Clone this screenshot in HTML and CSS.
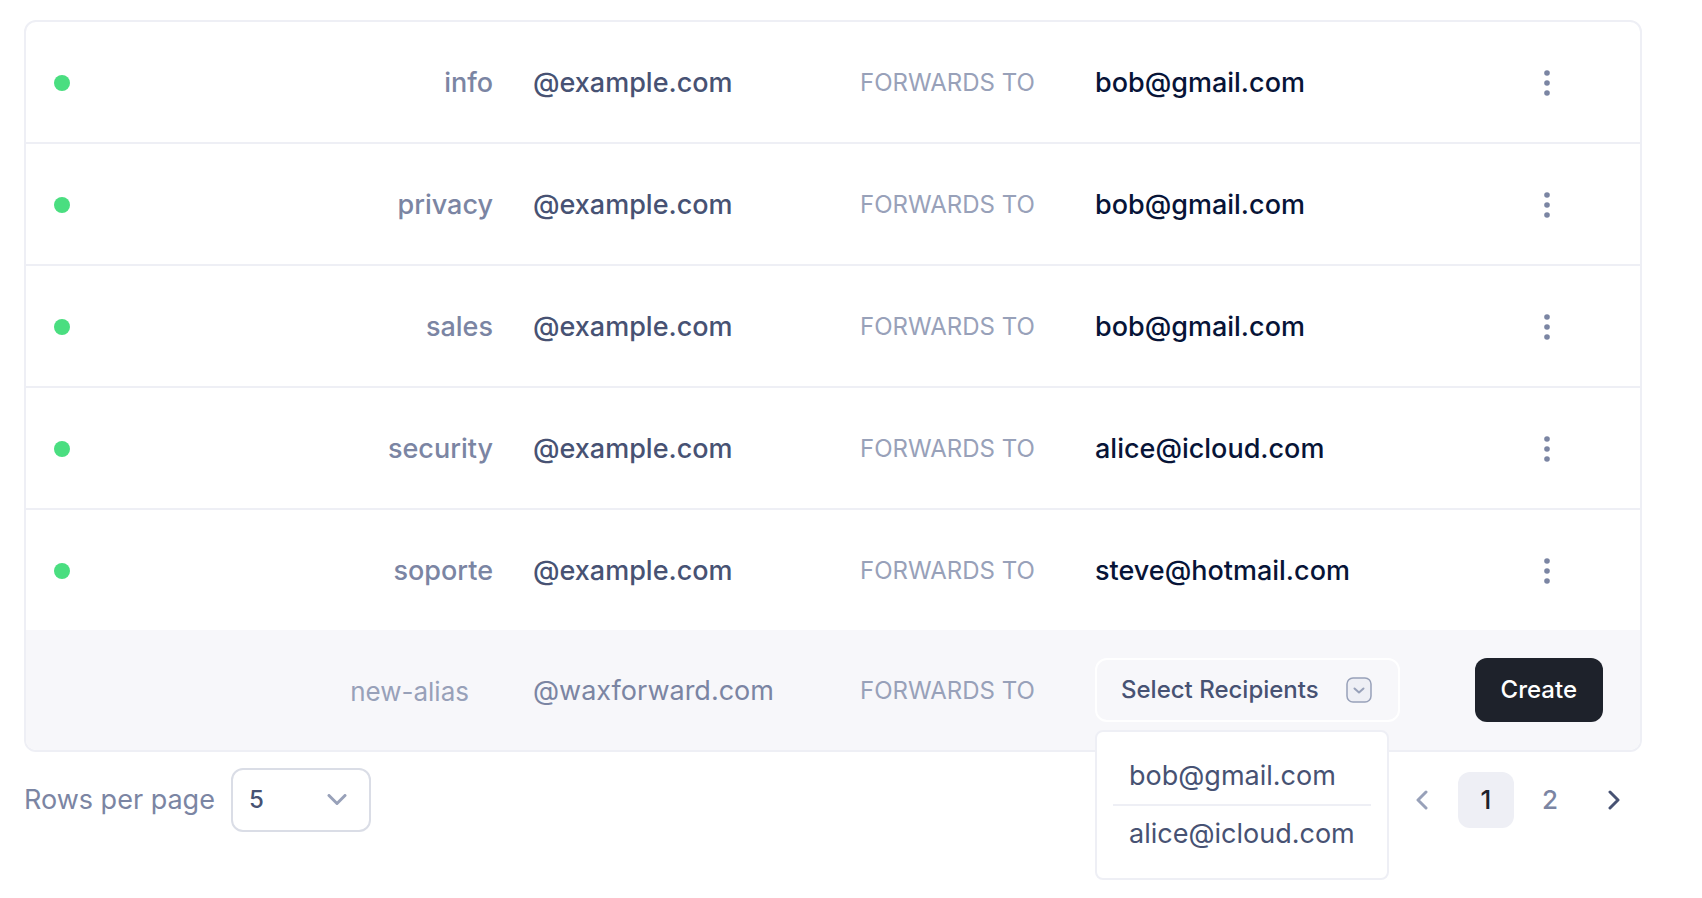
FILE: index.html
```html
<!DOCTYPE html>
<html lang="en">
<head>
    <meta charset="UTF-8">
    <meta name="viewport" content="width=device-width, initial-scale=1.0">
    <title>Aliases</title>
    <link rel="stylesheet" href="styles.css">
</head>
<body>

    <div class="container">
        <form id="aliasForm" class="card">
            <table class="aliases">
                <colgroup>
                    <col class="col-status">
                    <col class="col-alias">
                    <col class="col-domain">
                    <col class="col-forwards">
                    <col class="col-recipient">
                    <col class="col-actions">
                </colgroup>
                <tbody>
                    <tr>
                        <td><span class="status"></span></td>
                        <td class="alias">info</td>
                        <td class="domain">@example.com</td>
                        <td class="forwards">FORWARDS TO</td>
                        <td class="recipient">bob@gmail.com</td>
                        <td class="actions">
                            <button type="button" class="menu-button" aria-label="Options for info">
                                <svg width="6" height="26" viewBox="0 0 6 26"><circle cx="3" cy="3" r="2.8"/><circle cx="3" cy="13" r="2.8"/><circle cx="3" cy="23" r="2.8"/></svg>
                            </button>
                        </td>
                    </tr>
                    <tr>
                        <td><span class="status"></span></td>
                        <td class="alias">privacy</td>
                        <td class="domain">@example.com</td>
                        <td class="forwards">FORWARDS TO</td>
                        <td class="recipient">bob@gmail.com</td>
                        <td class="actions">
                            <button type="button" class="menu-button" aria-label="Options for privacy">
                                <svg width="6" height="26" viewBox="0 0 6 26"><circle cx="3" cy="3" r="2.8"/><circle cx="3" cy="13" r="2.8"/><circle cx="3" cy="23" r="2.8"/></svg>
                            </button>
                        </td>
                    </tr>
                    <tr>
                        <td><span class="status"></span></td>
                        <td class="alias">sales</td>
                        <td class="domain">@example.com</td>
                        <td class="forwards">FORWARDS TO</td>
                        <td class="recipient">bob@gmail.com</td>
                        <td class="actions">
                            <button type="button" class="menu-button" aria-label="Options for sales">
                                <svg width="6" height="26" viewBox="0 0 6 26"><circle cx="3" cy="3" r="2.8"/><circle cx="3" cy="13" r="2.8"/><circle cx="3" cy="23" r="2.8"/></svg>
                            </button>
                        </td>
                    </tr>
                    <tr>
                        <td><span class="status"></span></td>
                        <td class="alias">security</td>
                        <td class="domain">@example.com</td>
                        <td class="forwards">FORWARDS TO</td>
                        <td class="recipient">alice@icloud.com</td>
                        <td class="actions">
                            <button type="button" class="menu-button" aria-label="Options for security">
                                <svg width="6" height="26" viewBox="0 0 6 26"><circle cx="3" cy="3" r="2.8"/><circle cx="3" cy="13" r="2.8"/><circle cx="3" cy="23" r="2.8"/></svg>
                            </button>
                        </td>
                    </tr>
                    <tr>
                        <td><span class="status"></span></td>
                        <td class="alias">soporte</td>
                        <td class="domain">@example.com</td>
                        <td class="forwards">FORWARDS TO</td>
                        <td class="recipient">steve@hotmail.com</td>
                        <td class="actions">
                            <button type="button" class="menu-button" aria-label="Options for soporte">
                                <svg width="6" height="26" viewBox="0 0 6 26"><circle cx="3" cy="3" r="2.8"/><circle cx="3" cy="13" r="2.8"/><circle cx="3" cy="23" r="2.8"/></svg>
                            </button>
                        </td>
                    </tr>
                </tbody>
                <!-- new alias row -->
                <tfoot>
                    <tr>
                        <td></td>
                        <td class="alias"><input type="text" id="newAlias" name="newAlias" class="alias-input" placeholder="new-alias" aria-label="New alias"></td>
                        <td class="domain">@waxforward.com</td>
                        <td class="forwards">FORWARDS TO</td>
                        <td class="recipient">
                            <div class="dropdown">
                                <button type="button" id="recipientsButton" class="dropdown-button" aria-expanded="true" aria-controls="recipientsMenu">
                                    Select Recipients
                                    <svg width="26" height="26" viewBox="0 0 26 26" fill="none">
                                        <rect x="1" y="1" width="24" height="24" rx="6" fill="#eeeff5" stroke="#98a1b9" stroke-width="1.5"/>
                                        <path d="M8.5 11.5 13 15.5l4.500-4" stroke="#98a1b9" stroke-width="2" stroke-linecap="round" stroke-linejoin="round"/>
                                    </svg>
                                </button>
                                <ul id="recipientsMenu" class="dropdown-menu">
                                    <li><button type="button">bob@gmail.com</button></li>
                                    <li><button type="button">alice@icloud.com</button></li>
                                </ul>
                            </div>
                        </td>
                        <td class="actions"><button type="submit" class="create-button">Create</button></td>
                    </tr>
                </tfoot>
            </table>
        </form>

        <div class="footer">
            <div class="rows">
                <label for="rowsPerPage">Rows per page</label>
                <div class="select">
                    <select id="rowsPerPage" name="rowsPerPage">
                        <option>5</option>
                        <option>10</option>
                        <option>25</option>
                    </select>
                    <svg width="20" height="12" viewBox="0 0 20 12"><path d="M2 1.500 10 9.500l8-8"/></svg>
                </div>
            </div>
            <nav class="pagination" aria-label="Pagination">
                <button type="button" class="prev" aria-label="Previous page">
                    <svg width="12" height="20" viewBox="0 0 12 20"><path d="M10 2 2 10l8 8"/></svg>
                </button>
                <a href="#1" class="active" aria-current="page">1</a>
                <a href="#2">2</a>
                <button type="button" class="next" aria-label="Next page">
                    <svg width="12" height="20" viewBox="0 0 12 20"><path d="M2 2 10 10l-8 8"/></svg>
                </button>
            </nav>
        </div>
    </div>

<script>
    const recipientsButton = document.getElementById('recipientsButton');
    const recipientsMenu = document.getElementById('recipientsMenu');

    recipientsButton.addEventListener('click', function () {
        recipientsMenu.hidden = !recipientsMenu.hidden;
        recipientsButton.setAttribute('aria-expanded', String(!recipientsMenu.hidden));
    });

    document.getElementById('aliasForm').addEventListener('submit', function (event) {
        event.preventDefault();
    });
</script>

</body>
</html>
```
FILE: styles.css
```css
* {
    box-sizing: border-box;
}

body {
    font-family: 'Inter', sans-serif;
    font-size: 27px;
    line-height: 40px;
    color: #475273;
    background-color: #fff;
    min-height: 100vh;
    margin: 0;
    padding: 20px 60px 20px 24px;
}

button,
input,
select {
    font: inherit;
    color: inherit;
    margin: 0;
}

button {
    background: none;
    border: none;
    padding: 0;
    cursor: pointer;
}

.card {
    border: 2px solid #eeeff5;
    border-radius: 12px;
}

.aliases {
    width: 100%;
    table-layout: fixed;
    border-spacing: 0;
}

.col-status {
    width: 80px;
}

.col-domain {
    width: 327px;
}

.col-forwards {
    width: 235px;
}

.col-recipient {
    width: 340px;
}

.col-actions {
    width: 225px;
}

.aliases td {
    height: 122px;
    padding: 2px 20px 0;
    border-bottom: 2px solid #eeeff5;
    white-space: nowrap;
}

.aliases td:first-child {
    padding-left: 28px;
}

.aliases tbody tr:last-child td,
.aliases tfoot td {
    height: 120px;
    border-bottom: none;
}

.aliases tfoot td {
    background-color: #f7f7fa;
}

.aliases tfoot .recipient,
.aliases tfoot .actions {
    padding-top: 0;
}

.aliases tfoot td:first-child {
    border-bottom-left-radius: 10px;
}

.aliases tfoot td:last-child {
    border-bottom-right-radius: 10px;
}

.status {
    display: block;
    width: 16px;
    height: 16px;
    border-radius: 50%;
    background-color: #4ade80;
}

.aliases .alias {
    text-align: right;
    font-weight: 500;
    color: #7b85a3;
}

.domain {
    font-weight: 500;
}

.forwards {
    font-size: 24px;
    color: #98a1b9;
}

.recipient {
    font-weight: 500;
    color: #071437;
}

.aliases .actions {
    text-align: right;
    padding-right: 37px;
}

.menu-button {
    width: 112px;
    height: 64px;
    vertical-align: middle;
}

.menu-button svg {
    display: block;
    margin: 0 auto;
    fill: #7b85a3;
}

tfoot .domain {
    font-weight: 400;
    color: #7b85a3;
}

.alias-input {
    width: 100%;
    height: 64px;
    padding: 0 24px;
    border: none;
    background: transparent;
    font-size: 26px;
    font-weight: 400;
    text-align: right;
}

.alias-input::placeholder {
    color: #98a1b9;
    opacity: 1;
}

.dropdown {
    position: relative;
    color: #475273;
}

.dropdown-button {
    display: flex;
    align-items: center;
    gap: 27px;
    height: 64px;
    padding: 0 26px 0 24px;
    border: 2px solid #fff;
    border-radius: 12px;
    font-size: 24px;
    font-weight: 500;
}

.dropdown-menu {
    position: absolute;
    top: 72px;
    left: 0;
    margin: 0;
    padding: 16px;
    list-style: none;
    background-color: #fff;
    border: 2px solid #eeeff5;
    border-radius: 8px;
}

.dropdown-menu li + li {
    border-top: 2px solid #eeeff5;
}

.dropdown-menu button {
    display: block;
    width: 100%;
    height: 56px;
    padding: 0 16px;
    text-align: left;
    font-weight: 400;
}

.create-button {
    height: 64px;
    padding: 0 26px;
    border-radius: 12px;
    background-color: #1e222b;
    color: #fff;
    font-size: 24px;
    font-weight: 500;
    vertical-align: middle;
}

.footer {
    display: flex;
    align-items: center;
    justify-content: space-between;
    margin-top: 16px;
}

.rows {
    display: flex;
    align-items: center;
    gap: 16px;
    color: #7b85a3;
}

.select {
    position: relative;
}

.select select {
    appearance: none;
    display: block;
    width: 140px;
    height: 64px;
    padding: 0 16px;
    border: 2px solid #dadde6;
    border-radius: 12px;
    background-color: #fff;
    color: #475273;
    font-size: 24px;
    font-weight: 500;
}

.select svg {
    position: absolute;
    top: 26px;
    right: 24px;
    pointer-events: none;
}

.select path,
.pagination path {
    fill: none;
    stroke: #98a1b9;
    stroke-width: 3;
    stroke-linecap: round;
    stroke-linejoin: round;
}

.pagination {
    display: flex;
    gap: 8px;
}

.pagination a,
.pagination button {
    display: flex;
    align-items: center;
    justify-content: center;
    width: 56px;
    height: 56px;
    border-radius: 12px;
    color: #7b85a3;
    font-size: 26px;
    font-weight: 500;
    text-decoration: none;
}

.pagination .active {
    background-color: #eeeff5;
    color: #1e222b;
}

.pagination .next path {
    stroke: #475273;
}
```
